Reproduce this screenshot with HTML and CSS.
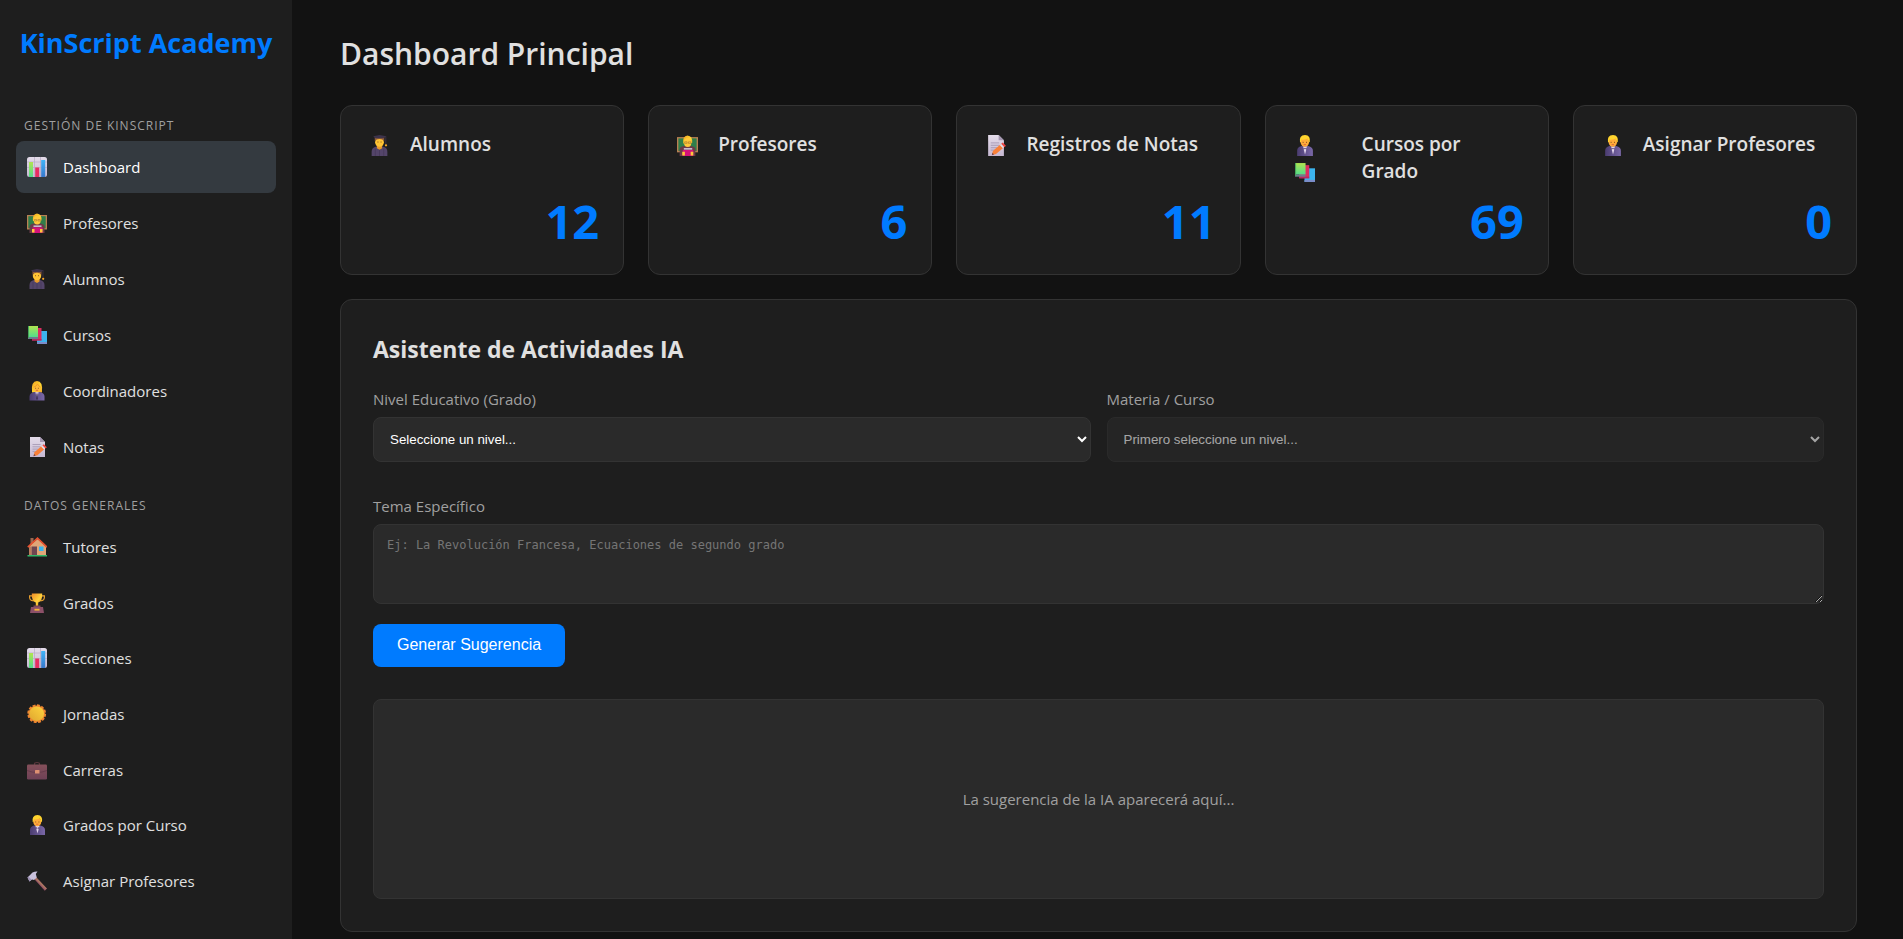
FILE: index.html
```html
<!DOCTYPE html>
<html lang="es">
<head>
<meta charset="utf-8">
<title>KinScript Academy</title>
<link rel="stylesheet" href="styles.css">
</head>
<body>
<svg class="sprite" aria-hidden="true">
  <defs>
    <linearGradient id="gGreen" x1="0" y1="0" x2="0" y2="1"><stop offset="0" stop-color="#b0e450"/><stop offset="1" stop-color="#52dc8c"/></linearGradient>
    <linearGradient id="gBlue" x1="0" y1="0" x2="0" y2="1"><stop offset="0" stop-color="#3fb4f8"/><stop offset="1" stop-color="#3878cc"/></linearGradient>
    <linearGradient id="gPaper" x1="0" y1="0" x2="0" y2="1"><stop offset="0" stop-color="#e4dcea"/><stop offset="1" stop-color="#c6b8d2"/></linearGradient>
    <linearGradient id="gHair" x1="0" y1="0" x2="1" y2="1"><stop offset="0" stop-color="#f0a020"/><stop offset=".6" stop-color="#ffd832"/><stop offset="1" stop-color="#f0a428"/></linearGradient>
    <linearGradient id="gSuit" x1="0" y1="0" x2="1" y2="0"><stop offset="0" stop-color="#4a3c70"/><stop offset="1" stop-color="#7a68a8"/></linearGradient>
    <linearGradient id="gGold" x1="0" y1="0" x2="1" y2="1"><stop offset="0" stop-color="#f08a28"/><stop offset=".55" stop-color="#ffd23c"/><stop offset="1" stop-color="#d88420"/></linearGradient>
    <linearGradient id="gCase" x1="0" y1="0" x2="0" y2="1"><stop offset="0" stop-color="#85505a"/><stop offset="1" stop-color="#6e4156"/></linearGradient>
    <linearGradient id="gSun" x1="1" y1="0" x2="0" y2="1"><stop offset="0" stop-color="#ffd53e"/><stop offset="1" stop-color="#dfa630"/></linearGradient>
  </defs>
  <symbol id="i-chart" viewBox="0 0 20 20">
    <rect width="20" height="20" rx="2.5" fill="url(#gPaper)"/>
    <path d="M7.500 0v20M13.500 0v20M0 5h20M0 10.500h20" stroke="#b8aac6" stroke-width=".7"/>
    <rect x="2" y="5" width="4" height="15" fill="url(#gGreen)"/>
    <rect x="8.200" y="10.500" width="4" height="9.500" fill="#e62e62"/>
    <rect x="14.200" y="3" width="4" height="17" fill="url(#gBlue)"/>
  </symbol>
  <symbol id="i-teacher" viewBox="0 0 20 20">
    <rect y="2" width="20" height="14.500" fill="#b98052"/>
    <rect x="1.300" y="3.200" width="17.400" height="12" fill="#2f7e4a"/>
    <path d="M2.500 20v-6q0-3 4-3.500h7q4 .5 4 3.500v6z" fill="#6b3b48"/>
    <path d="M6 8q-1-7 4-7.500 5 .5 4.500 7z" fill="url(#gHair)"/>
    <ellipse cx="10.200" cy="7.200" rx="3.500" ry="4.300" fill="#ffc83a"/>
    <path d="M7.300 6.500h2.300v1.500H7.300zM10.900 6.500h2.300v1.500h-2.300z" fill="none" stroke="#9a6a30" stroke-width=".5"/>
    <path d="M5.500 14.300h10V20h-10z" fill="#d4127a"/>
    <path d="M6.500 12.400h8v1.600h-8z" fill="#c8b8d0"/>
    <path d="M5 16h2.500v3.500H5zM13 16h2.500v3.500H13z" fill="#ffc83a"/>
  </symbol>
  <symbol id="i-student" viewBox="0 0 20 20">
    <path d="M2.500 20v-4q0-4 4.500-5h6q4.500 1 4.500 5v4z" fill="#54456a"/>
    <path d="M6 13v7M14 13v7M10 13v7" stroke="#453858" stroke-width=".7"/>
    <path d="M7.500 9h5v3.500L10 14l-2.500-1.500z" fill="#e89a2c"/>
    <ellipse cx="10" cy="6.800" rx="4.200" ry="4.500" fill="#ffc434"/>
    <path d="M5.500 6V1.800h9V6q-1.500-2.300-4.500-2.300T5.500 6z" fill="#8c5a3a"/>
    <path d="M4 1.200 10 0l6.500 1.200L13.800 3H6.200z" fill="#3d334a"/>
    <path d="M16 1.200v8" stroke="#3d334a" stroke-width=".8"/>
    <circle cx="16.200" cy="9.800" r="1.100" fill="#f5a526"/>
    <path d="M8.500 6.200v1M11.500 6.200v1" stroke="#70431e" stroke-width=".8"/>
  </symbol>
  <symbol id="i-books" viewBox="0 0 20 20">
    <path d="M10 6h10v13H10z" fill="#3cb4ee"/><path d="M10 17h10v2H10z" fill="#7c8cc8"/>
    <path d="M5 3h9.500v12.500H5z" fill="#de2d60"/><path d="M5 14h9.500v1.500H5z" fill="#b52a62"/>
    <path d="M1 1h10v11H1z" fill="url(#gGreen)"/><path d="M1 12h10v2H1z" fill="#6d7c90"/><path d="M1 1h1v12H1z" fill="#47a65c"/>
  </symbol>
  <symbol id="i-woman" viewBox="0 0 20 20">
    <path d="M5 11.500Q3.800 0 10 0t5 11.500z" fill="url(#gHair)"/>
    <path d="M2.500 19.500v-4q0-3.500 4.500-4.500h6q4.500 1 4.500 4.500v4z" fill="url(#gSuit)"/>
    <path d="m8.300 11 1.700 7 1.700-7z" fill="#cfc2de"/><path d="m9.500 12.500-.5 5 1 2 1-2-.5-5z" fill="#42345c"/>
    <ellipse cx="10" cy="7" rx="3.300" ry="4.200" fill="#ffb93a"/>
    <path d="M6.500 6.200q3-.7 4-3.300Q11.500 5.200 13.600 6.200" fill="none" stroke="#f3a022" stroke-width="1"/>
    <path d="M8.600 6.800v.9M11.400 6.800v.9" stroke="#70431e" stroke-width=".8"/>
    <path d="M8.900 9.300h2.200" stroke="#ce4c3c" stroke-width=".7"/>
  </symbol>
  <symbol id="i-man" viewBox="0 0 20 20">
    <path d="M3 20v-5q0-3.500 4-4.500h6.500q4.500 1 4.500 4.500v5z" fill="url(#gSuit)"/>
    <path d="m8.500 11 2 7.500 2-7.500z" fill="#e2d4ec"/><path d="m8.900 12 1.600.9 1.600-.9v2l-1.600-.8-1.600.8z" fill="#5b4a78"/>
    <ellipse cx="10.300" cy="6.800" rx="4" ry="4.400" fill="#ffac3a"/>
    <path d="M5.700 7Q4.500.4 10.500 0q5.600.4 4.500 7l-1-.5q-.3-2-1.500-3Q9.500 4.800 7.200 4.500L6.600 6.700z" fill="#ffd42e"/>
    <path d="M8.700 6.500v1M11.900 6.500v1" stroke="#70431e" stroke-width=".8"/>
    <path d="M9.200 9.200h2.200" stroke="#ce4c3c" stroke-width=".7"/>
  </symbol>
  <symbol id="i-memo" viewBox="0 0 20 20">
    <path d="M3 0h10l5 5v15H3z" fill="url(#gPaper)"/><path d="M13 0v5h5z" fill="#a698b2"/>
    <path d="M5.500 7.500h8M5.500 9.800h8M5.500 12.100h6M5.500 14.400h4" stroke="#a295b0" stroke-width=".8"/>
    <path d="m6.500 19.200 1-4 7.300-6.400 3 3-7.300 6.400z" fill="#f98038"/>
    <path d="m14 9.500 1.200-1 3 3-1.200 1z" fill="#e4e0ee"/><path d="m15.400 8.300 1.500-1.100 3 3-1.300 1.400z" fill="#ee4540"/>
    <path d="m6.500 19.200.6-2.200 1.500 1.500z" fill="#6a4250"/>
  </symbol>
  <symbol id="i-house" viewBox="0 0 20 20">
    <path d="M3.500 1h3v6h-3z" fill="#9c6850"/><path d="M2 9.500 10.500 2 19 9.500V18H2z" fill="#e0a678"/>
    <path d="M2 9.500h2V18H2z" fill="#b87c5c"/><path d="M4.500 9.500H10V18H4.500z" fill="#6e4650"/>
    <path d="M12 9.500h4.500V14H12z" fill="#36b4f0"/><path d="m.8 10.200 9.700-9L20 10.200" fill="none" stroke="#e8502f" stroke-width="1.600"/>
    <path d="M.5 18H20v1.500H.5z" fill="#32b768"/>
  </symbol>
  <symbol id="i-trophy" viewBox="0 0 20 20">
    <path d="M5.500 2.800H2.600q-.6 5 4 5M14.500 2.800h2.900q.6 5-4 5" fill="none" stroke="#e8a030" stroke-width="1.200"/>
    <path d="M4.800.5h10.400q.4 7.500-4 9v4H8.800v-4q-4.400-1.500-4-9z" fill="url(#gGold)"/>
    <path d="M6.500 12.500h7v2h-7z" fill="#7c4658"/><path d="M4 14h12l1 6H3z" fill="#8c5068"/>
    <path d="M7.500 15.800h5v1.800h-5z" fill="#f7b538"/>
  </symbol>
  <symbol id="i-sun" viewBox="0 0 20 20">
    <circle cx="9.700" cy="9.700" r="8.300" fill="#ee8630"/>
    <circle cx="9.700" cy="9.700" r="8.400" fill="none" stroke="#ee8630" stroke-width="2" stroke-dasharray="2.900 1.500"/>
    <circle cx="9.700" cy="9.700" r="7.300" fill="url(#gSun)"/>
  </symbol>
  <symbol id="i-case" viewBox="0 0 20 20">
    <path d="M7.500 5V3.800q0-1.300 2.500-1.300t2.500 1.300V5" fill="none" stroke="#5c383e" stroke-width="1.200"/>
    <rect y="4.500" width="20" height="15" rx="1.200" fill="url(#gCase)"/>
    <path d="M0 10.500q10 4 20 0" fill="none" stroke="#5f3748" stroke-width=".7"/>
    <rect x="8" y="10" width="4.500" height="3.500" rx=".5" fill="#de9072"/>
  </symbol>
  <symbol id="i-hammer" viewBox="0 0 20 20">
    <path d="m7 7.800 2-1.800 11 11.500-2.200 2.200z" fill="#985468"/><path d="m7.600 7.200 1.200-1.100 10.800 11.400-1 .9z" fill="#a9785e"/>
    <path d="m.5 6.500 5-5Q8 .3 10.500.5L8.800 3l1 3.500L7 9 5 8.500l-2.500 2z" fill="#c9c1dc"/>
    <path d="m.5 6.500 1-1 3 3.200-2 1.800z" fill="#9d91b4"/>
  </symbol>
</svg>

<div class="layout">
  <aside class="sidebar">
    <div class="brand">KinScript Academy</div>
    <nav class="nav">
      <h2 class="nav-title">GESTIÓN DE KINSCRIPT</h2>
      <ul class="nav-list nav-list-main">
        <li><a class="nav-link active" href="#"><svg class="icon"><use href="#i-chart"/></svg>Dashboard</a></li>
        <li><a class="nav-link" href="#"><svg class="icon"><use href="#i-teacher"/></svg>Profesores</a></li>
        <li><a class="nav-link" href="#"><svg class="icon"><use href="#i-student"/></svg>Alumnos</a></li>
        <li><a class="nav-link" href="#"><svg class="icon"><use href="#i-books"/></svg>Cursos</a></li>
        <li><a class="nav-link" href="#"><svg class="icon"><use href="#i-woman"/></svg>Coordinadores</a></li>
        <li><a class="nav-link" href="#"><svg class="icon"><use href="#i-memo"/></svg>Notas</a></li>
      </ul>
      <h2 class="nav-title">DATOS GENERALES</h2>
      <ul class="nav-list nav-list-data">
        <li><a class="nav-link" href="#"><svg class="icon"><use href="#i-house"/></svg>Tutores</a></li>
        <li><a class="nav-link" href="#"><svg class="icon"><use href="#i-trophy"/></svg>Grados</a></li>
        <li><a class="nav-link" href="#"><svg class="icon"><use href="#i-chart"/></svg>Secciones</a></li>
        <li><a class="nav-link" href="#"><svg class="icon"><use href="#i-sun"/></svg>Jornadas</a></li>
        <li><a class="nav-link" href="#"><svg class="icon"><use href="#i-case"/></svg>Carreras</a></li>
        <li><a class="nav-link" href="#"><svg class="icon"><use href="#i-man"/></svg>Grados por Curso</a></li>
        <li><a class="nav-link" href="#"><svg class="icon"><use href="#i-hammer"/></svg>Asignar Profesores</a></li>
      </ul>
    </nav>
  </aside>

  <main class="main">
    <h1 class="page-title">Dashboard Principal</h1>
    <section class="cards">
      <article class="card">
        <div class="card-head"><span class="card-icons"><svg class="icon"><use href="#i-student"/></svg></span><h3 class="card-title">Alumnos</h3></div>
        <p class="card-value">12</p>
      </article>
      <article class="card">
        <div class="card-head"><span class="card-icons"><svg class="icon"><use href="#i-teacher"/></svg></span><h3 class="card-title">Profesores</h3></div>
        <p class="card-value">6</p>
      </article>
      <article class="card">
        <div class="card-head"><span class="card-icons"><svg class="icon"><use href="#i-memo"/></svg></span><h3 class="card-title">Registros de Notas</h3></div>
        <p class="card-value">11</p>
      </article>
      <article class="card">
        <div class="card-head"><span class="card-icons card-icons-double"><svg class="icon"><use href="#i-man"/></svg><svg class="icon"><use href="#i-books"/></svg></span><h3 class="card-title">Cursos por Grado</h3></div>
        <p class="card-value">69</p>
      </article>
      <article class="card">
        <div class="card-head"><span class="card-icons"><svg class="icon"><use href="#i-man"/></svg></span><h3 class="card-title">Asignar Profesores</h3></div>
        <p class="card-value">0</p>
      </article>
    </section>

    <section class="panel">
      <h2 class="panel-title">Asistente de Actividades IA</h2>
      <form class="form">
        <div class="form-row">
          <div class="field">
            <label for="nivel">Nivel Educativo (Grado)</label>
            <select id="nivel" class="control"><option>Seleccione un nivel...</option></select>
          </div>
          <div class="field">
            <label for="materia">Materia / Curso</label>
            <select id="materia" class="control" disabled><option>Primero seleccione un nivel...</option></select>
          </div>
        </div>
        <div class="field">
          <label for="tema">Tema Específico</label>
          <textarea id="tema" class="control control-area" placeholder="Ej: La Revolución Francesa, Ecuaciones de segundo grado"></textarea>
        </div>
        <button class="submit" type="button">Generar Sugerencia</button>
      </form>
      <div class="result">La sugerencia de la IA aparecerá aquí...</div>
    </section>
  </main>
</div>
</body>
</html>
```
FILE: styles.css
```css
* { box-sizing: border-box; }

body {
  margin: 0;
  background: #121212;
  color: #e0e0e0;
  font-family: "Open Sans", "Noto Sans", sans-serif;
  font-size: 15px;
}

h1, h2, h3, p, ul { margin: 0; padding: 0; }
ul { list-style: none; }

.sprite { position: absolute; width: 0; height: 0; }

.layout { display: flex; min-height: 100vh; }

/* Sidebar */
.sidebar {
  flex: none;
  width: 292px;
  padding: 24px 16px;
  background: #1e1e1e;
}

.brand {
  color: #007bff;
  font-size: 27px;
  font-weight: 700;
  line-height: 38px;
  text-align: center;
  white-space: nowrap;
}

.nav { padding-top: 54px; }

.nav-title {
  padding: 0 8px;
  color: #a0a0a0;
  font-size: 12px;
  font-weight: 400;
  letter-spacing: 1px;
  line-height: 20px;
}

.nav-list { display: grid; grid-auto-rows: 1fr; gap: 4px; padding-top: 5px; }
.nav-list-main { height: 336px; margin-bottom: 24px; }
.nav-list-data { height: 390px; }

.nav-link {
  display: flex;
  align-items: center;
  gap: 16px;
  height: 100%;
  padding: 1px 11px 0;
  border-radius: 8px;
  color: #e0e0e0;
  text-decoration: none;
}

.nav-link.active { background: #343a40; color: #fff; }

.icon { flex: none; width: 20px; height: 20px; }

/* Main column */
.main { flex: 1; min-width: 0; padding: 32px 46px 7px 48px; }

.page-title { font-size: 30px; font-weight: 600; line-height: 44px; }

.cards {
  display: grid;
  grid-template-columns: repeat(5, 1fr);
  gap: 24px;
  margin-top: 29px;
}

.card {
  display: flex;
  flex-direction: column;
  justify-content: space-between;
  min-height: 170px;
  padding: 24px;
  background: #1e1e1e;
  border: 1px solid #333;
  border-radius: 12px;
}

.card-head { display: flex; gap: 16px; height: 62px; padding-top: 1px; }

.card-icons { display: grid; gap: 6px; flex: none; width: 29px; padding-top: 4px; justify-items: center; align-content: start; }
.card-icons .icon { width: 21px; height: 21px; }
.card-icons-double { width: 56px; justify-items: start; padding-left: 4px; }

.card-title { padding-right: 6px; font-size: 19px; font-weight: 600; line-height: 27px; }

.card-value {
  color: #007bff;
  font-size: 47px;
  font-weight: 700;
  line-height: 58px;
  text-align: right;
}

/* Assistant panel */
.panel {
  margin-top: 24px;
  padding: 32px;
  background: #1e1e1e;
  border: 1px solid #333;
  border-radius: 12px;
}

.panel-title { font-size: 23px; font-weight: 700; line-height: 35px; }

.form { display: flex; flex-direction: column; align-items: flex-start; }
.form-row { display: grid; grid-template-columns: 1fr 1fr; gap: 16px; width: 100%; margin: 20px 0 32px; }
.field { display: flex; flex-direction: column; gap: 6px; width: 100%; }
.field label { color: #a0a0a0; line-height: 24px; }

.control {
  width: 100%;
  background: #2a2a2a;
  border: 1px solid #333;
  border-radius: 8px;
  color: #fff;
}

select.control {
  height: 45px;
  padding: 0 12px;
  font-family: "Liberation Sans", Arial, sans-serif;
}

select.control:disabled { color: #fff; opacity: 0.6; }

.control-area {
  display: block;
  height: 80px;
  padding: 13px;
  font-family: "DejaVu Sans Mono", monospace;
  font-size: 12px;
}

.control-area::placeholder { color: #757575; }

.submit {
  height: 43px;
  margin-top: 20px;
  padding: 0 24px 2px;
  border: 0;
  border-radius: 8px;
  background: #007bff;
  color: #fff;
  font-family: "Liberation Sans", Arial, sans-serif;
  font-size: 16px;
}

.result {
  display: flex;
  align-items: center;
  justify-content: center;
  min-height: 200px;
  margin-top: 32px;
  background: #2a2a2a;
  border: 1px solid #333;
  border-radius: 8px;
  color: #a0a0a0;
}
```
